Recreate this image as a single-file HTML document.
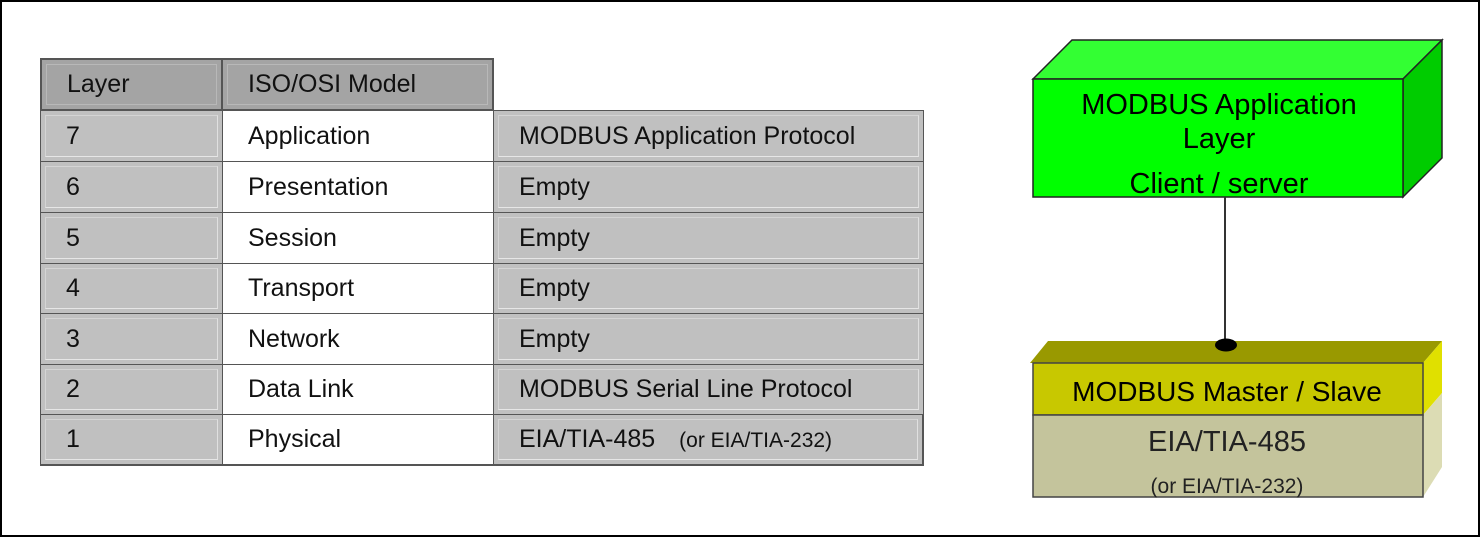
<!DOCTYPE html>
<html><head><style>
body{margin:0;width:1480px;height:537px;background:#fff;position:relative;overflow:hidden;font-family:"Liberation Sans",Arial,sans-serif;}
.frame{position:absolute;left:0;top:0;width:1476px;height:533px;border:2px solid #000;}
.c{position:absolute;box-sizing:border-box;border:1px solid #555;font-size:25px;color:#111;line-height:1;display:flex;align-items:center;padding-left:25px;}
.c3{padding-left:25px;}
.g{background:#c0c0c0;}
.h{background:#a4a4a4;}
.w{background:#fff;}
.g::before,.h::before{content:"";position:absolute;left:4px;top:4px;right:4px;bottom:4px;border:1px solid #d4d4d4;border-right-color:#e0e0e0;border-bottom-color:#e6e6e6;}
.h::before{border-color:#b8b8b8;}
.c span{position:relative;}
</style></head><body>
<div class="frame"></div>

<div class="c h" style="left:40px;top:58px;width:183px;height:53px;border-width:2px"><span>Layer</span></div>
<div class="c h" style="left:221px;top:58px;width:273px;height:53px;border-width:2px"><span>ISO/OSI Model</span></div>

<div class="c g" style="left:40px;top:110px;width:183px;height:52px"><span>7</span></div>
<div class="c w" style="left:222px;top:110px;width:272px;height:52px"><span>Application</span></div>
<div class="c g" style="left:493px;top:110px;width:431px;height:52px"><span>MODBUS Application Protocol</span></div>

<div class="c g" style="left:40px;top:161px;width:183px;height:52px"><span>6</span></div>
<div class="c w" style="left:222px;top:161px;width:272px;height:52px"><span>Presentation</span></div>
<div class="c g" style="left:493px;top:161px;width:431px;height:52px"><span>Empty</span></div>

<div class="c g" style="left:40px;top:212px;width:183px;height:52px"><span>5</span></div>
<div class="c w" style="left:222px;top:212px;width:272px;height:52px"><span>Session</span></div>
<div class="c g" style="left:493px;top:212px;width:431px;height:52px"><span>Empty</span></div>

<div class="c g" style="left:40px;top:263px;width:183px;height:51px"><span>4</span></div>
<div class="c w" style="left:222px;top:263px;width:272px;height:51px"><span>Transport</span></div>
<div class="c g" style="left:493px;top:263px;width:431px;height:51px"><span>Empty</span></div>

<div class="c g" style="left:40px;top:313px;width:183px;height:52px"><span>3</span></div>
<div class="c w" style="left:222px;top:313px;width:272px;height:52px"><span>Network</span></div>
<div class="c g" style="left:493px;top:313px;width:431px;height:52px"><span>Empty</span></div>

<div class="c g" style="left:40px;top:364px;width:183px;height:51px"><span>2</span></div>
<div class="c w" style="left:222px;top:364px;width:272px;height:51px"><span>Data Link</span></div>
<div class="c g" style="left:493px;top:364px;width:431px;height:51px"><span>MODBUS Serial Line Protocol</span></div>

<div class="c g" style="left:40px;top:414px;width:183px;height:52px;border-width:1px 1px 2px 1px"><span>1</span></div>
<div class="c w" style="left:222px;top:414px;width:272px;height:52px;border-bottom-width:2px"><span>Physical</span></div>
<div class="c g" style="left:493px;top:414px;width:431px;height:52px;border-width:1px 2px 2px 1px"><span>EIA/TIA-485<small style="font-size:21px;margin-left:24px">(or EIA/TIA-232)</small></span></div>

<svg style="position:absolute;left:0;top:0" width="1480" height="537">
 <polygon points="1033,79 1072,40 1442,40 1403,79" fill="#33ff33" stroke="#222" stroke-width="1.5"/>
 <polygon points="1403,79 1442,40 1442,158 1403,197" fill="#00cc00" stroke="#222" stroke-width="1.5"/>
 <rect x="1033" y="79" width="370" height="118" fill="#00ff00" stroke="#222" stroke-width="1.5"/>
 <line x1="1225" y1="197" x2="1225" y2="343" stroke="#333" stroke-width="2"/>
 <polygon points="1030,363 1048,341 1442,341 1423,363" fill="#999900"/>
 <polygon points="1423,363 1442,341 1442,393 1423,415" fill="#e0e000"/>
 <polygon points="1423,415 1442,393 1442,467 1423,497" fill="#dcdcb4"/>
 <rect x="1033" y="363" width="390" height="52" fill="#c8c800" stroke="#444" stroke-width="1.5"/>
 <rect x="1033" y="415" width="390" height="82" fill="#c4c49c" stroke="#444" stroke-width="1.5"/>
 <ellipse cx="1226" cy="345" rx="11" ry="6.5" fill="#000"/>
 <g font-family="Liberation Sans, Arial, sans-serif" fill="#000" text-anchor="middle">
  <text x="1219" y="114" font-size="29">MODBUS Application</text>
  <text x="1219" y="148" font-size="29">Layer</text>
  <text x="1219" y="193" font-size="29">Client / server</text>
  <text x="1227" y="401" font-size="28">MODBUS Master / Slave</text>
  <text x="1227" y="451" font-size="29" fill="#222">EIA/TIA-485</text>
  <text x="1227" y="493" font-size="21" fill="#222">(or EIA/TIA-232)</text>
 </g>
</svg>
</body></html>
